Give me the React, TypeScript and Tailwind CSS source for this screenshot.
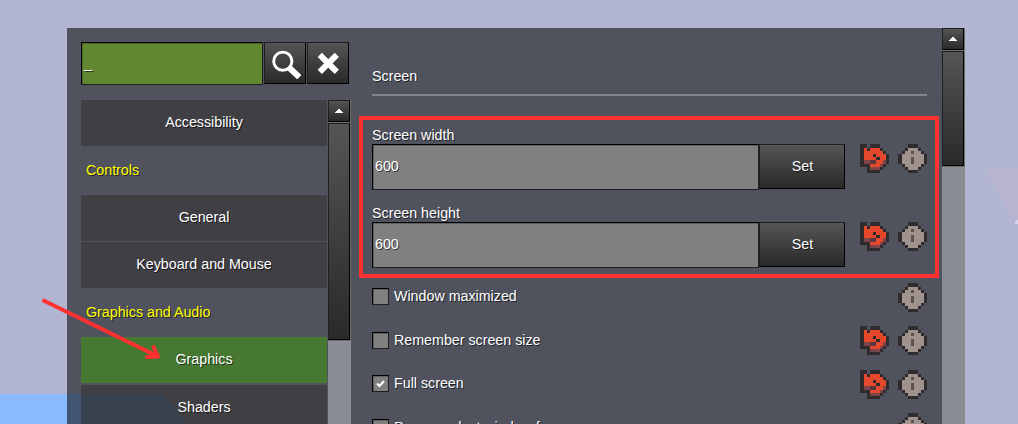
import React from "react";

const label = "whitespace-nowrap text-white [text-shadow:1px_1px_0_rgba(0,0,0,0.6)]";

const palette: Record<string, string> = {
  d: "#302c2e",
  r: "#e6482e",
  m: "#7d444a",
  n: "#5a353b",
  l: "#a0938e",
  g: "#5a5353",
};

const resetRows = ["dd.ddd...", "drdrrrd..", "drrrrrrd.", "drrrdrrrd", "drrrrdrrd", "dmmnnrrmd", "dddrrrmd.", "..dmmmd..", "..dddd..."];
const infoRows = ["...ddd...", "..dllld..", ".dllglld.", "dllllllld", "dlllgllld", "dlllgllld", ".dllllld.", "..dllld..", "...ddd..."];
const stops = [0, 4, 7, 10, 13, 16, 20, 23, 26, 29];

function PixelIcon({ rows }: { rows: string[] }) {
  return (
    <svg width="29" height="29" viewBox="0 0 29 29" shapeRendering="crispEdges" className="block shrink-0">
      {rows.map((row, y) =>
        row.split("").map((c, x) =>
          c === "." ? null : (
            <rect key={`${x}-${y}`} x={stops[x]} y={stops[y]} width={stops[x + 1] - stops[x]} height={stops[y + 1] - stops[y]} fill={palette[c]} />
          ),
        ),
      )}
    </svg>
  );
}

const raised = "border border-t-[#1f1f20] border-l-[#1f1f20] border-r-black border-b-black bg-linear-to-b from-[#555] to-[#2a2a2a]";

function ScrollBar({ thumb }: { thumb: string }) {
  return (
    <div className="flex h-full w-[23px] shrink-0 flex-col bg-[#8a8d94]">
      <div className="h-[23px] shrink-0 bg-[#6d6d70] pr-px">
        <div className={`flex h-[22px] w-[22px] justify-center pt-[8px] ${raised}`}>
          <svg width="8" height="4" viewBox="0 0 8 4" shapeRendering="crispEdges" fill="#fff">
            <path d="M3 0h2v1h1v1h1v1h1v1H0V3h1V2h1V1h1z" />
          </svg>
        </div>
      </div>
      <div className={`shrink-0 bg-[#6d6d70] pr-px pb-px ${thumb}`}>
        <div className={`h-full w-[22px] ${raised}`} />
      </div>
    </div>
  );
}

function Item({ text, active, children }: { text: string; active?: boolean; children?: React.ReactNode }) {
  return (
    <div className={`relative flex h-[46px] shrink-0 items-center justify-center ${active ? "bg-[#467832]" : "bg-[#403f44]"}`}>
      {children}
      <span className={`relative ${label}`}>{text}</span>
    </div>
  );
}

function Category({ text }: { text: string }) {
  return (
    <div className="flex h-[46px] shrink-0 items-center pl-[5px]">
      <span className={`${label} !text-[#ffff00]`}>{text}</span>
    </div>
  );
}

function NumberField({ name, value }: { name: string; value: string }) {
  return (
    <div className="flex h-[78px] shrink-0 flex-col">
      <div className={`h-[18px] leading-[18px] ${label}`}>{name}</div>
      <div className="flex">
        <div className="flex h-[46px] w-[387px] items-center border border-t-black border-l-black border-r-[#1f1f20] border-b-[#1f1f20] bg-[#808080] pl-[2px] shadow-[inset_1px_1px_0_#606060]">
          <span className={label}>{value}</span>
        </div>
        <div className={`flex h-[45px] w-[86px] items-center justify-center pl-px ${raised}`}>
          <span className={label}>Set</span>
        </div>
        <div className="ml-[15px] flex gap-[9px]">
          <PixelIcon rows={resetRows} />
          <PixelIcon rows={infoRows} />
        </div>
      </div>
    </div>
  );
}

type CheckRowProps = { name: string; checked?: boolean; reset?: boolean; height: string; boxTop?: string; textTop?: string };

function CheckRow({ name, checked, reset, height, boxTop = "mt-[5px]", textTop = "mt-[4px]" }: CheckRowProps) {
  return (
    <div className={`flex w-[555px] shrink-0 items-start ${height}`}>
      <div className={`flex h-[17px] w-[17px] items-center justify-center border border-t-black border-l-black border-r-[#1f1f20] border-b-[#1f1f20] bg-[#808080] shadow-[inset_1px_1px_0_#606060] ${boxTop}`}>
        {checked && (
          <svg width="9" height="8" viewBox="0 0 9 8" fill="none" stroke="#fff" strokeWidth="2">
            <path d="M1 3.5 3.5 6 8 1" />
          </svg>
        )}
      </div>
      <span className={`ml-[5px] leading-[18px] ${label} ${textTop}`}>{name}</span>
      <div className="ml-auto flex gap-[9px]">
        {reset && <PixelIcon rows={resetRows} />}
        <PixelIcon rows={infoRows} />
      </div>
    </div>
  );
}

export default function App() {
  return (
    <div className="relative h-[424px] w-[1018px] overflow-hidden bg-[#b1b5d1] pt-[28px] pl-[67px] font-['Liberation_Sans',Arial,sans-serif] text-[14.25px]">
      <svg className="absolute top-0 left-0" width="1018" height="424">
        <path d="M0 394H67V424H0z" fill="#8cbaff" />
        <path d="M985.5 169H1018V224L1015 222z" fill="#b9b5cf" />
        <path d="M1018 220V224H1015V222H1016V221H1017V220z" fill="#d5d6ee" />
      </svg>
      <div className="relative flex h-[396px] w-[898px] bg-[#50535e]">
        <svg className="absolute bottom-0 left-0" width="14" height="30">
          <path d="M0 0H14V30H0z" fill="#3f5570" />
        </svg>
        <div className="flex w-[284px] shrink-0 flex-col pt-[14px] pl-[14px]">
          <div className="flex h-[58px] shrink-0 items-start">
            <div className="flex h-[43px] w-[182px] items-center border border-t-black border-l-black border-r-[#1f1f20] border-b-[#1f1f20] bg-[#628731] pl-[2px] shadow-[inset_1px_1px_0_#4a6625]">
              <span className={label}>_</span>
            </div>
            <div className={`ml-px flex h-[42px] w-[42px] items-center justify-center ${raised}`}>
              <svg width="32" height="32" viewBox="0 0 32 32" fill="none" stroke="#fff">
                <circle cx="13.8" cy="14.2" r="9.1" strokeWidth="2.9" />
                <path d="M20 20.5 30.3 30.3" strokeWidth="6" />
              </svg>
            </div>
            <div className={`ml-px flex h-[42px] w-[42px] items-center justify-center ${raised}`}>
              <svg width="24" height="24" viewBox="0 0 24 24" fill="none" stroke="#fff" strokeWidth="6">
                <path d="M3.8 3.8 20.8 20.8M20.8 3.8 3.8 20.8" />
              </svg>
            </div>
          </div>
          <div className="flex h-[324px] shrink-0">
            <div className="mr-px flex w-[246px] flex-col gap-[1.4px] overflow-hidden">
              <Item text="Accessibility" />
              <Category text="Controls" />
              <Item text="General" />
              <Item text="Keyboard and Mouse" />
              <Category text="Graphics and Audio" />
              <Item text="Graphics" active />
              <div className="h-[0.6px] shrink-0 -mt-[1.4px]" />
              <Item text="Shaders">
                <svg className="absolute top-0 left-0" width="246" height="46">
                  <path d="M0 9H81L107 39.3H0z" fill="#38434f" />
                </svg>
              </Item>
            </div>
            <ScrollBar thumb="h-[218px]" />
          </div>
        </div>
        <div className="flex min-w-0 flex-1 flex-col overflow-hidden pl-[21px]">
          <div className="h-[66px] shrink-0 pt-[39px] leading-[18px]">
            <span className={label}>Screen</span>
          </div>
          <div className="h-[2px] w-[555px] shrink-0 bg-[#82848a]" />
          <div className="mt-[30px] flex shrink-0 flex-col">
            <NumberField name="Screen width" value="600" />
            <NumberField name="Screen height" value="600" />
          </div>
          <div className="mt-px flex flex-col">
            <CheckRow name="Window maximized" height="h-[43px]" />
            <CheckRow name="Remember screen size" reset height="h-[44px]" boxTop="mt-[6px]" textTop="mt-[5px]" />
            <CheckRow name="Full screen" checked reset height="h-[43px]" />
            <CheckRow name="Pause on lost window focus" height="h-[44px]" boxTop="mt-[6px]" textTop="mt-[5px]" />
          </div>
        </div>
        <ScrollBar thumb="h-[116px]" />
      </div>
      <div className="absolute top-[116px] left-[359px] h-[162px] w-[580px] border-4 border-[#ff3131]" />
      <svg className="absolute top-0 left-0" width="400" height="424" fill="none" stroke="#ff3131" strokeWidth="4">
        <path d="M42.5 300 158 356.5" />
        <path d="M153.5 347 158 356.5 147 357" strokeLinecap="round" strokeLinejoin="round" />
      </svg>
    </div>
  );
}
